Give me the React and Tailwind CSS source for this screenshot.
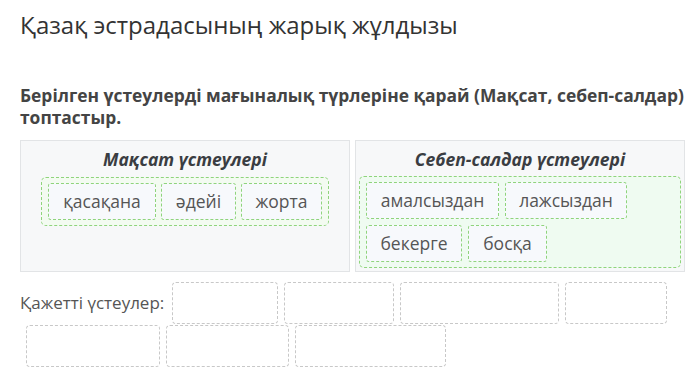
import React from "react";

const font = { fontFamily: '"Open Sans", "Noto Sans", sans-serif' };

function Item({ w, children }) {
  return (
    <div
      className={`h-[37px] flex items-center justify-center rounded-[3px] border border-dashed border-[#8fd47c] bg-[#f7f9fc] text-[17.5px] text-[#555]`}
      style={{ width: w }}
    >
      {children}
    </div>
  );
}

function Empty({ w }) {
  return (
    <div
      className="ml-[6px] h-[42px] rounded-[4px] border border-dashed border-[#c8c8c8] bg-white"
      style={{ width: w }}
    />
  );
}

export default function App() {
  return (
    <div className="w-[695px] h-[384px] bg-white overflow-hidden" style={font}>
      <div className="pl-[20px] pt-[8px] h-[43px] text-[24px] leading-[34px] text-[#333]">
        Қазақ эстрадасының жарық жұлдызы
      </div>
      <div className="pl-[20px] pr-[4px] mt-[41px] text-[17.4px] leading-[22px] font-bold text-[#444]">
        Берілген үстеулерді мағыналық түрлеріне қарай (Мақсат, себеп-салдар) топтастыр.
      </div>
      <div className="mt-[12px] ml-[20px] flex gap-[5px] w-[665px]">
        <div className="w-[330px] h-[132px] border border-[#e2e4e6] bg-[#f7f8f9] flex flex-col items-center">
          <div className="mt-[5px] h-[26px] leading-[26px] text-[17.5px] font-bold italic text-[#3a3d42]">
            Мақсат үстеулері
          </div>
          <div className="mt-[5px] w-[288px] rounded-[5px] border border-dashed border-[#8fd47c] bg-[#f3fbf1] px-[6px] py-[5px] flex flex-wrap gap-[5px]">
            <Item w={108}>қасақана</Item>
            <Item w={75}>әдейі</Item>
            <Item w={81}>жорта</Item>
          </div>
        </div>
        <div className="w-[330px] h-[132px] border border-[#e2e4e6] bg-[#f7f8f9] flex flex-col items-center">
          <div className="mt-[5px] h-[26px] leading-[26px] text-[17.5px] font-bold italic text-[#3a3d42]">
            Себеп-салдар үстеулері
          </div>
          <div className="mt-[4px] w-[322px] rounded-[5px] border border-dashed border-[#8fd47c] bg-[#effbf1] px-[6px] py-[5px] flex flex-wrap gap-x-[6px] gap-y-[6px]">
            <Item w={133}>амалсыздан</Item>
            <Item w={122}>лажсыздан</Item>
            <Item w={96}>бекерге</Item>
            <Item w={79}>босқа</Item>
          </div>
        </div>
      </div>
      <div className="mt-[10px] pl-[20px] w-[690px] flex flex-wrap items-center gap-y-[1px]">
        <div className="mr-[2px] text-[17px] text-[#555] leading-[26px]">Қажетті үстеулер:</div>
        <Empty w={106} />
        <Empty w={110} />
        <Empty w={159} />
        <Empty w={102} />
        <Empty w={134} />
        <Empty w={123} />
        <Empty w={151} />
      </div>
    </div>
  );
}
